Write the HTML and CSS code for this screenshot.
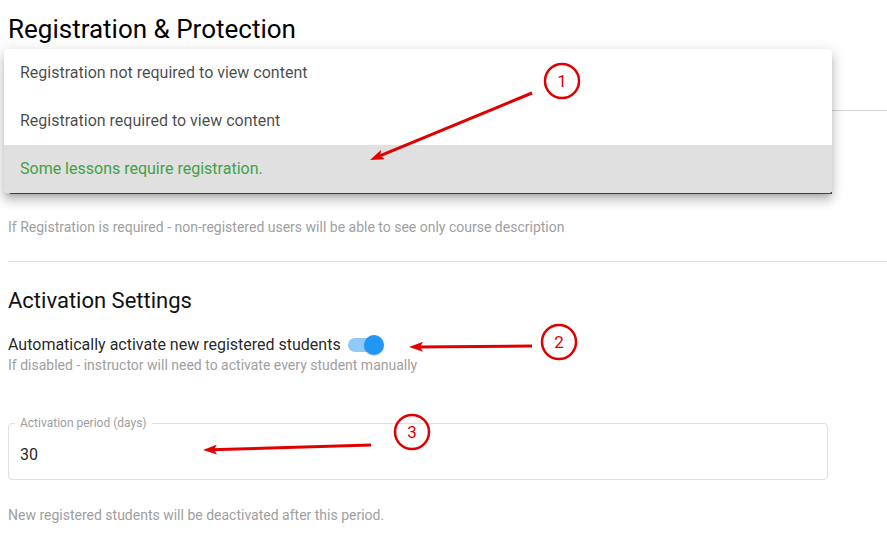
FILE: index.html
```html
<!DOCTYPE html>
<html>
<head>
<meta charset="utf-8">
<link rel="stylesheet" href="styles.css">
</head>
<body>
<div class="page">
  <h2 class="title">Registration &amp; Protection</h2>
  <div class="select-field">
    <div class="field-line"></div>
    <div class="focus-line"></div>
    <ul class="menu">
      <li class="menu-item">Registration not required to view content</li>
      <li class="menu-item">Registration required to view content</li>
      <li class="menu-item selected">Some lessons require registration.</li>
    </ul>
  </div>
  <p class="hint hint-reg">If Registration is required - non-registered users will be able to see only course description</p>
  <hr class="divider">
  <h3 class="subtitle">Activation Settings</h3>
  <div class="switch-row">
    <span class="switch-label">Automatically activate new registered students</span>
    <span class="switch"><span class="track"></span><span class="thumb"></span></span>
  </div>
  <p class="hint hint-switch">If disabled - instructor will need to activate every student manually</p>
  <fieldset class="outlined">
    <legend class="outlined-label">Activation period (days)</legend>
    <div class="outlined-value">30</div>
  </fieldset>
  <p class="hint hint-period">New registered students will be deactivated after this period.</p>
</div>
<svg class="annotations" width="887" height="542" viewBox="0 0 887 542">
  <defs>
    <marker id="head" viewBox="0 0 16 10" refX="6" refY="5" markerWidth="16" markerHeight="10" markerUnits="userSpaceOnUse" orient="auto">
      <path d="M0,0 L14,5 L0,10 L3,5 z" fill="#e00000"/>
    </marker>
  </defs>
  <g fill="none" stroke="#e00000" stroke-width="2.5">
    <circle cx="562" cy="81" r="17"/>
    <circle cx="559" cy="342" r="17"/>
    <circle cx="412" cy="432" r="17"/>
  </g>
  <g stroke="#e00000" stroke-width="3" fill="none">
    <line x1="532" y1="93" x2="377.4" y2="156.9" marker-end="url(#head)"/>
    <line x1="532" y1="346" x2="417" y2="346.9" marker-end="url(#head)"/>
    <line x1="371" y1="445" x2="211" y2="449.8" marker-end="url(#head)"/>
  </g>
  <g fill="#e00000" font-family="Roboto, 'Liberation Sans', sans-serif" font-size="17" text-anchor="middle">
    <text x="562" y="87">1</text>
    <text x="559" y="348">2</text>
    <text x="412" y="438">3</text>
  </g>
</svg>
</body>
</html>
```

FILE: styles.css
```css
html, body {
  margin: 0;
  padding: 0;
  background: #fff;
}
body {
  font-family: Roboto, "Liberation Sans", Arial, sans-serif;
  color: rgba(0, 0, 0, 0.87);
  width: 887px;
  height: 542px;
  overflow: hidden;
  position: relative;
}
.page {
  padding-left: 8px;
}
.title {
  margin: 13px 0 0;
  font-size: 26px;
  line-height: 32px;
  font-weight: 400;
  color: #000;
}
.select-field {
  position: relative;
  height: 150px;
}
.field-line {
  position: absolute;
  left: 0;
  right: 0;
  top: 65px;
  height: 1px;
  background: #d6d6d6;
}
.focus-line {
  position: absolute;
  left: 2px;
  width: 822px;
  top: 147px;
  height: 2px;
  background: #2e7d32;
}
.menu {
  position: absolute;
  left: -4px;
  top: 4px;
  width: 828px;
  margin: 0;
  padding: 0;
  list-style: none;
  background: #fff;
  border-radius: 4px;
  overflow: hidden;
  box-shadow: 0 5px 5px -3px rgba(0,0,0,0.2), 0 8px 10px 1px rgba(0,0,0,0.14), 0 3px 14px 2px rgba(0,0,0,0.12);
}
.menu-item {
  height: 48px;
  line-height: 48px;
  padding-left: 16px;
  font-size: 16px;
  color: rgba(0, 0, 0, 0.72);
}
.menu-item.selected {
  background: #e0e0e0;
  color: #43a047;
}
.hint {
  margin: 0;
  font-size: 14px;
  line-height: 20px;
  color: #a0a0a0;
}
.hint-reg {
  margin-top: 22px;
}
.divider {
  margin: 24px 0 0;
  border: 0;
  height: 1px;
  background: #e0e0e0;
}
.subtitle {
  margin: 25px 0 0;
  font-size: 22px;
  line-height: 28px;
  font-weight: 400;
  color: #111;
}
.switch-row {
  margin-top: 19px;
  display: flex;
  align-items: center;
  height: 22px;
}
.switch-label {
  font-size: 16px;
  line-height: 22px;
  color: rgba(0, 0, 0, 0.87);
}
.switch {
  position: relative;
  width: 36px;
  height: 20px;
  margin-left: 7px;
  display: inline-block;
}
.track {
  position: absolute;
  left: 0;
  top: 3px;
  width: 34px;
  height: 14px;
  border-radius: 7px;
  background: #90caf9;
}
.thumb {
  position: absolute;
  left: 16px;
  top: 0;
  width: 20px;
  height: 20px;
  border-radius: 50%;
  background: #2196f3;
  box-shadow: 0 1px 2px rgba(0,0,0,0.2);
}
.hint-switch {
  margin-top: -1px;
}
.outlined {
  margin: 41px 0 0;
  padding: 13px 11px 12px;
  width: 820px;
  box-sizing: border-box;
  border: 1px solid #e0e0e0;
  border-radius: 4px;
  min-width: 0;
}
.outlined-label {
  margin-left: -5px;
  padding: 0 5px;
  font-size: 12px;
  line-height: 14px;
  color: #9e9e9e;
}
.outlined-value {
  font-size: 16px;
  line-height: 24px;
  color: rgba(0, 0, 0, 0.87);
}
.hint-period {
  margin-top: 25px;
}
.annotations {
  position: absolute;
  left: 0;
  top: 0;
  pointer-events: none;
}
```
